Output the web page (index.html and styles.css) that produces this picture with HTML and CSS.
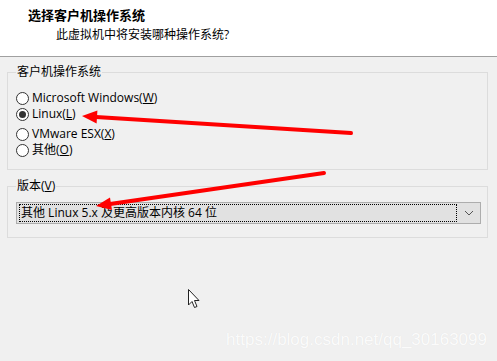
FILE: index.html
```html
<!DOCTYPE html>
<html>
<head>
    <meta charset="utf-8">
    <title>新建虚拟机向导</title>
    <link rel="stylesheet" href="styles.css">
</head>
<body>
    <div class="header">
        <div class="title">选择客户机操作系统</div>
        <div class="subtitle">此虚拟机中将安装哪种操作系统?</div>
    </div>

    <fieldset class="group group-os">
        <legend>客户机操作系统</legend>
        <label class="radio"><span class="dot"></span>Microsoft Windows(<u>W</u>)</label>
        <label class="radio checked"><span class="dot"></span>Linux(<u>L</u>)</label>
        <label class="radio gap"><span class="dot"></span>VMware ESX(<u>X</u>)</label>
        <label class="radio"><span class="dot"></span>其他(<u>O</u>)</label>
    </fieldset>

    <fieldset class="group group-ver">
        <legend>版本(<u>V</u>)</legend>
        <div class="combo">
            <div class="combo-text">其他 Linux 5.x 及更高版本内核 64 位</div>
            <svg class="combo-arrow" width="10" height="6" viewBox="0 0 10 6">
                <path d="M1 1 L5 5 L9 1" fill="none" stroke="#555" stroke-width="1"/>
            </svg>
        </div>
    </fieldset>

    <svg class="marks" width="497" height="361" viewBox="0 0 497 361">
        <line x1="351" y1="133" x2="96" y2="117" stroke="#f00" stroke-width="4" stroke-linecap="round"/>
        <polygon points="82,116 97.4,110.5 96.6,123.5" fill="#f00"/>
        <line x1="324" y1="173" x2="110" y2="204" stroke="#f00" stroke-width="4" stroke-linecap="round"/>
        <polygon points="96,206 112,210 110,197.5" fill="#f00"/>
    </svg>

    <svg class="cursor" width="14" height="22" viewBox="0 0 14 22">
        <path d="M1.5 1.5 L1.5 17 L5 13.5 L7.5 19.5 L10 18.5 L7.5 12.5 L12 12.5 Z" fill="#fff" stroke="#222" stroke-width="1" stroke-linejoin="round"/>
    </svg>

    <div class="watermark">https://blog.csdn.net/qq_30163099</div>
</body>
</html>
```

FILE: styles.css
```css
body {
    margin: 0;
    width: 497px;
    height: 361px;
    position: relative;
    overflow: hidden;
    background-color: #f0f0f0;
    font-family: "Open Sans", "Noto Sans CJK SC", sans-serif;
    font-size: 12px;
    color: #000;
}

.header {
    height: 56px;
    background-color: #fff;
    border-bottom: 1px solid #a0a0a0;
}

.title {
    padding: 6px 0 0 28px;
    font-size: 13px;
    font-weight: bold;
    line-height: 18px;
}

.subtitle {
    padding: 2px 0 0 56px;
    line-height: 18px;
}

.group {
    margin: 0 9px 0 7px;
    padding: 0 6px 0 8px;
    border: 1px solid #dcdcdc;
}

.group legend {
    padding: 0 1px;
    line-height: 16px;
    height: 16px;
}

.group-os {
    margin-top: 7px;
    padding-top: 10px;
    padding-bottom: 11px;
}

.group-ver {
    margin-top: 8px;
    padding-top: 8px;
    padding-bottom: 13px;
}

.radio {
    display: flex;
    align-items: center;
    height: 16px;
    line-height: 16px;
}

.radio.gap {
    margin-top: 4px;
}

.radio .dot {
    box-sizing: border-box;
    width: 13px;
    height: 13px;
    margin-right: 3px;
    border: 1px solid #333;
    border-radius: 50%;
    background-color: #fff;
    display: flex;
    align-items: center;
    justify-content: center;
}

.radio.checked .dot::after {
    content: "";
    width: 7px;
    height: 7px;
    border-radius: 50%;
    background-color: #333;
}

.combo {
    display: flex;
    align-items: center;
    height: 22px;
    box-sizing: border-box;
    border: 1px solid #adadad;
    background-color: #e1e1e1;
    padding: 2px;
}

.combo-text {
    flex: 1;
    height: 16px;
    line-height: 16px;
    padding-left: 1px;
    border: 1px dotted #000;
    box-sizing: content-box;
}

.combo-arrow {
    margin: 0 4px 0 7px;
}

.marks {
    position: absolute;
    left: 0;
    top: 0;
}

.cursor {
    position: absolute;
    left: 187px;
    top: 288px;
}

.watermark {
    position: absolute;
    right: 10px;
    top: 330px;
    font-family: "Liberation Sans", sans-serif;
    font-size: 17px;
    line-height: 20px;
    color: #fbfbfb;
    text-shadow: 0 0 1px rgba(0, 0, 0, 0.07);
}
```
